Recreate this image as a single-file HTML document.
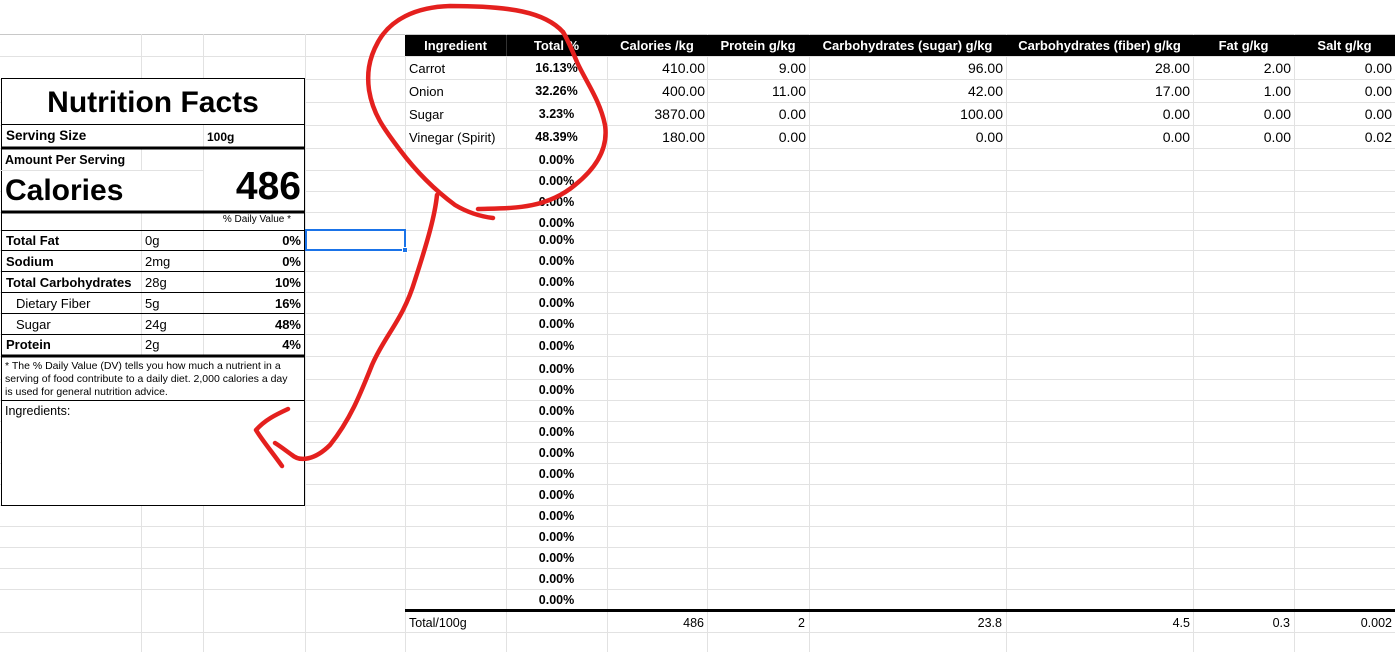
<!DOCTYPE html>
<html><head><meta charset="utf-8"><style>
*{margin:0;padding:0;box-sizing:border-box}
body{width:1395px;height:652px;overflow:hidden;background:#fff;font-family:"Liberation Sans",Arial,sans-serif;font-size:13px;color:#000;position:relative}
.a{position:absolute;white-space:nowrap;line-height:1}
.r{text-align:right}
.c{text-align:center}
.b{font-weight:bold}
.hl{position:absolute;background:#000}
</style></head><body>
<svg style="position:absolute;left:0;top:0" width="1395" height="652">
<g stroke="#e2e2e2" stroke-width="1">
<line x1="0" y1="34.5" x2="1395" y2="34.5" stroke="#c8c8c8"/>
<line x1="0" y1="56.5" x2="1395" y2="56.5"/><line x1="0" y1="79.5" x2="1395" y2="79.5"/><line x1="0" y1="102.5" x2="1395" y2="102.5"/><line x1="0" y1="125.5" x2="1395" y2="125.5"/><line x1="0" y1="148.5" x2="1395" y2="148.5"/><line x1="0" y1="170.5" x2="1395" y2="170.5"/><line x1="0" y1="191.5" x2="1395" y2="191.5"/><line x1="0" y1="212.5" x2="1395" y2="212.5"/><line x1="0" y1="230.5" x2="1395" y2="230.5"/><line x1="0" y1="250.5" x2="1395" y2="250.5"/><line x1="0" y1="271.5" x2="1395" y2="271.5"/><line x1="0" y1="292.5" x2="1395" y2="292.5"/><line x1="0" y1="313.5" x2="1395" y2="313.5"/><line x1="0" y1="334.5" x2="1395" y2="334.5"/><line x1="0" y1="356.5" x2="1395" y2="356.5"/><line x1="0" y1="379.5" x2="1395" y2="379.5"/><line x1="0" y1="400.5" x2="1395" y2="400.5"/><line x1="0" y1="421.5" x2="1395" y2="421.5"/><line x1="0" y1="442.5" x2="1395" y2="442.5"/><line x1="0" y1="463.5" x2="1395" y2="463.5"/><line x1="0" y1="484.5" x2="1395" y2="484.5"/><line x1="0" y1="505.5" x2="1395" y2="505.5"/><line x1="0" y1="526.5" x2="1395" y2="526.5"/><line x1="0" y1="547.5" x2="1395" y2="547.5"/><line x1="0" y1="568.5" x2="1395" y2="568.5"/><line x1="0" y1="589.5" x2="1395" y2="589.5"/><line x1="0" y1="632.5" x2="1395" y2="632.5"/>
<line x1="141.5" y1="34" x2="141.5" y2="652"/><line x1="203.5" y1="34" x2="203.5" y2="652"/><line x1="305.5" y1="34" x2="305.5" y2="652"/><line x1="405.5" y1="34" x2="405.5" y2="652"/><line x1="506.5" y1="34" x2="506.5" y2="652"/><line x1="607.5" y1="34" x2="607.5" y2="652"/><line x1="707.5" y1="34" x2="707.5" y2="652"/><line x1="809.5" y1="34" x2="809.5" y2="652"/><line x1="1006.5" y1="34" x2="1006.5" y2="652"/><line x1="1193.5" y1="34" x2="1193.5" y2="652"/><line x1="1294.5" y1="34" x2="1294.5" y2="652"/>
</g>
</svg>
<div style="position:absolute;left:1px;top:78px;width:304px;height:428px;background:#fff;border:1px solid #000"></div>
<svg style="position:absolute;left:0;top:0" width="400" height="520">
<g stroke="#e2e2e2"><line x1="141.5" y1="148" x2="141.5" y2="170"/><line x1="203.5" y1="124" x2="203.5" y2="212"/><line x1="141.5" y1="212" x2="141.5" y2="355"/><line x1="203.5" y1="212" x2="203.5" y2="355"/><line x1="1" y1="170.5" x2="203" y2="170.5"/></g>
<g stroke="#000"><line x1="1" y1="124.5" x2="305" y2="124.5"/><line x1="1" y1="230.5" x2="305" y2="230.5"/><line x1="1" y1="250.5" x2="305" y2="250.5"/><line x1="1" y1="271.5" x2="305" y2="271.5"/><line x1="1" y1="292.5" x2="305" y2="292.5"/><line x1="1" y1="313.5" x2="305" y2="313.5"/><line x1="1" y1="334.5" x2="305" y2="334.5"/><line x1="1" y1="400.5" x2="305" y2="400.5"/></g>
<g stroke="#000" stroke-width="3"><line x1="1" y1="148" x2="305" y2="148"/><line x1="1" y1="212" x2="305" y2="212"/><line x1="1" y1="356" x2="305" y2="356"/></g>
</svg>
<div class="a b c" style="left:1px;width:304px;top:88px;font-size:30px">Nutrition Facts</div>
<div class="a b" style="left:6px;top:129px;font-size:13.5px">Serving Size</div>
<div class="a b" style="left:207px;top:131px;font-size:12px">100g</div>
<div class="a b" style="left:5px;top:154px;font-size:12.5px">Amount Per Serving</div>
<div class="a b" style="left:5px;top:176px;font-size:30px">Calories</div>
<div class="a b r" style="left:200px;width:101px;top:167px;font-size:39px">486</div>
<div class="a r" style="left:200px;width:91px;top:215px;font-size:10px">% Daily Value *</div>
<div class="a b" style="left:6px;top:234px">Total Fat</div><div class="a" style="left:145px;top:234px">0g</div><div class="a b r" style="left:210px;width:91px;top:234px">0%</div>
<div class="a b" style="left:6px;top:255px">Sodium</div><div class="a" style="left:145px;top:255px">2mg</div><div class="a b r" style="left:210px;width:91px;top:255px">0%</div>
<div class="a b" style="left:6px;top:276px">Total Carbohydrates</div><div class="a" style="left:145px;top:276px">28g</div><div class="a b r" style="left:210px;width:91px;top:276px">10%</div>
<div class="a" style="left:16px;top:297px">Dietary Fiber</div><div class="a" style="left:145px;top:297px">5g</div><div class="a b r" style="left:210px;width:91px;top:297px">16%</div>
<div class="a" style="left:16px;top:318px">Sugar</div><div class="a" style="left:145px;top:318px">24g</div><div class="a b r" style="left:210px;width:91px;top:318px">48%</div>
<div class="a b" style="left:6px;top:338px">Protein</div><div class="a" style="left:145px;top:338px">2g</div><div class="a b r" style="left:210px;width:91px;top:338px">4%</div>
<div class="a" style="left:5px;top:360px;font-size:10.5px;line-height:13px;white-space:normal;width:292px">* The % Daily Value (DV) tells you how much a nutrient in a serving of food contribute to a daily diet. 2,000 calories a day is used for general nutrition advice.</div>
<div class="a" style="left:5px;top:405px;font-size:12.5px">Ingredients:</div>
<div style="position:absolute;left:305px;top:229px;width:101px;height:22px;border:2px solid #1a73e8"></div>
<div style="position:absolute;left:402px;top:247px;width:6px;height:6px;background:#1a73e8;border:1px solid #fff"></div>
<div style="position:absolute;left:405px;top:35px;width:990px;height:21px;background:#000"></div>
<div style="position:absolute;left:506px;top:35px;width:1px;height:21px;background:#333"></div>
<div class="a b c" style="color:#fff;left:405px;width:101px;top:39px">Ingredient</div>
<div class="a b c" style="color:#fff;left:506px;width:101px;top:39px">Total %</div>
<div class="a b c" style="color:#fff;left:607px;width:100px;top:39px">Calories /kg</div>
<div class="a b c" style="color:#fff;left:707px;width:102px;top:39px">Protein g/kg</div>
<div class="a b c" style="color:#fff;left:809px;width:197px;top:39px">Carbohydrates (sugar) g/kg</div>
<div class="a b c" style="color:#fff;left:1006px;width:187px;top:39px">Carbohydrates (fiber) g/kg</div>
<div class="a b c" style="color:#fff;left:1193px;width:101px;top:39px">Fat g/kg</div>
<div class="a b c" style="color:#fff;left:1294px;width:101px;top:39px">Salt g/kg</div>
<div class="a" style="left:409px;top:62px">Carrot</div><div class="a" style="left:409px;top:85px">Onion</div><div class="a" style="left:409px;top:108px">Sugar</div><div class="a" style="left:409px;top:131px">Vinegar (Spirit)</div>
<div class="a b c" style="left:506px;width:101px;top:62px;font-size:12.5px">16.13%</div><div class="a b c" style="left:506px;width:101px;top:85px;font-size:12.5px">32.26%</div><div class="a b c" style="left:506px;width:101px;top:108px;font-size:12.5px">3.23%</div><div class="a b c" style="left:506px;width:101px;top:131px;font-size:12.5px">48.39%</div>
<div style="position:absolute;left:607px;top:57px;width:98px;font-size:14px;line-height:23px;text-align:right">410.00<br>400.00<br>3870.00<br>180.00</div>
<div style="position:absolute;left:707px;top:57px;width:99px;font-size:14px;line-height:23px;text-align:right">9.00<br>11.00<br>0.00<br>0.00</div>
<div style="position:absolute;left:809px;top:57px;width:194px;font-size:14px;line-height:23px;text-align:right">96.00<br>42.00<br>100.00<br>0.00</div>
<div style="position:absolute;left:1006px;top:57px;width:184px;font-size:14px;line-height:23px;text-align:right">28.00<br>17.00<br>0.00<br>0.00</div>
<div style="position:absolute;left:1193px;top:57px;width:98px;font-size:14px;line-height:23px;text-align:right">2.00<br>1.00<br>0.00<br>0.00</div>
<div style="position:absolute;left:1294px;top:57px;width:98px;font-size:14px;line-height:23px;text-align:right">0.00<br>0.00<br>0.00<br>0.02</div>
<div class="a b c" style="left:506px;width:101px;top:154px;font-size:12.5px">0.00%</div>
<div class="a b c" style="left:506px;width:101px;top:175px;font-size:12.5px">0.00%</div>
<div class="a b c" style="left:506px;width:101px;top:196px;font-size:12.5px">0.00%</div>
<div class="a b c" style="left:506px;width:101px;top:217px;font-size:12.5px">0.00%</div>
<div class="a b c" style="left:506px;width:101px;top:234px;font-size:12.5px">0.00%</div>
<div class="a b c" style="left:506px;width:101px;top:255px;font-size:12.5px">0.00%</div>
<div class="a b c" style="left:506px;width:101px;top:276px;font-size:12.5px">0.00%</div>
<div class="a b c" style="left:506px;width:101px;top:297px;font-size:12.5px">0.00%</div>
<div class="a b c" style="left:506px;width:101px;top:318px;font-size:12.5px">0.00%</div>
<div class="a b c" style="left:506px;width:101px;top:340px;font-size:12.5px">0.00%</div>
<div class="a b c" style="left:506px;width:101px;top:363px;font-size:12.5px">0.00%</div>
<div class="a b c" style="left:506px;width:101px;top:384px;font-size:12.5px">0.00%</div>
<div class="a b c" style="left:506px;width:101px;top:405px;font-size:12.5px">0.00%</div>
<div class="a b c" style="left:506px;width:101px;top:426px;font-size:12.5px">0.00%</div>
<div class="a b c" style="left:506px;width:101px;top:447px;font-size:12.5px">0.00%</div>
<div class="a b c" style="left:506px;width:101px;top:468px;font-size:12.5px">0.00%</div>
<div class="a b c" style="left:506px;width:101px;top:489px;font-size:12.5px">0.00%</div>
<div class="a b c" style="left:506px;width:101px;top:510px;font-size:12.5px">0.00%</div>
<div class="a b c" style="left:506px;width:101px;top:531px;font-size:12.5px">0.00%</div>
<div class="a b c" style="left:506px;width:101px;top:552px;font-size:12.5px">0.00%</div>
<div class="a b c" style="left:506px;width:101px;top:573px;font-size:12.5px">0.00%</div>
<div class="a b c" style="left:506px;width:101px;top:594px;font-size:12.5px">0.00%</div>
<div class="hl" style="left:405px;top:609px;width:990px;height:3px"></div>
<div class="a" style="left:409px;top:617px;font-size:12.5px">Total/100g</div>
<div class="a r" style="left:607px;width:97px;top:617px;font-size:12.5px">486</div>
<div class="a r" style="left:707px;width:98px;top:617px;font-size:12.5px">2</div>
<div class="a r" style="left:809px;width:193px;top:617px;font-size:12.5px">23.8</div>
<div class="a r" style="left:1006px;width:184px;top:617px;font-size:12.5px">4.5</div>
<div class="a r" style="left:1193px;width:97px;top:617px;font-size:12.5px">0.3</div>
<div class="a r" style="left:1294px;width:98px;top:617px;font-size:12.5px">0.002</div>
<svg style="position:absolute;left:0;top:0" width="1395" height="652">
<g fill="none" stroke="#e4201e" stroke-width="4.5" stroke-linecap="round" stroke-linejoin="round">
<path d="M563 32 C545 12 510 6 450 6 C415 7 390 20 378 42 C368 60 367 75 369 90 C373 115 385 130 400 150 C415 170 432 188 455 205 C470 214 485 217 493 218"/>
<path d="M478 209 C510 208 545 210 575 185 C600 165 608 145 605 125 C600 100 585 80 577 62 C572 50 568 40 563 32"/>
<path d="M437 195 C435 215 428 240 415 280 C403 320 385 335 372 365 C360 395 350 420 330 445 C315 460 300 462 292 455 C285 450 280 446 275 443"/>
<path d="M288 409 C275 415 265 420 256 430 C262 440 272 452 282 466"/>
</g>
</svg>
</body></html>
